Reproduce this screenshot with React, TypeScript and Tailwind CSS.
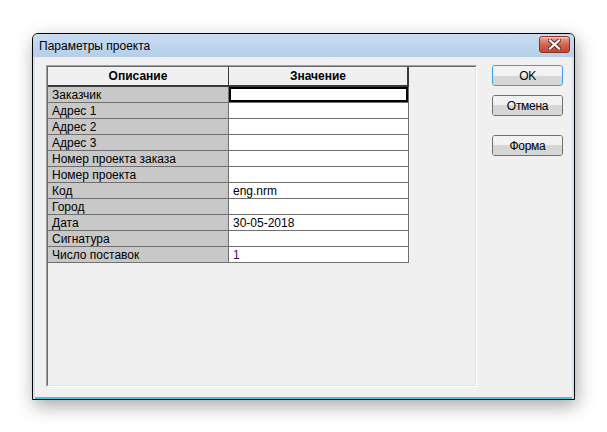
import React from "react";

type Row = { label: string; value?: string; accent?: boolean; selected?: boolean };

const rows: Row[] = [
  { label: "Заказчик", selected: true },
  { label: "Адрес 1" },
  { label: "Адрес 2" },
  { label: "Адрес 3" },
  { label: "Номер проекта заказа" },
  { label: "Номер проекта" },
  { label: "Код", value: "eng.nrm" },
  { label: "Город" },
  { label: "Дата", value: "30-05-2018" },
  { label: "Сигнатура" },
  { label: "Число поставок", value: "1", accent: true },
];

const font = { fontFamily: '"Liberation Sans", Arial, sans-serif' };

const Button = ({ label, primary, className = "" }: { label: string; primary?: boolean; className?: string }) => (
  <button
    className={
      "block h-[21px] w-[71px] rounded-[3px] border p-0 " +
      (primary
        ? "border-[#3c9fe0] shadow-[inset_0_0_0_1px_#a8e2fb] "
        : "border-[#707070] shadow-[inset_0_0_0_1px_#fcfcfc] ") +
      className
    }
  >
    <div className="flex h-full w-full items-center justify-center rounded-[2px] bg-gradient-to-b from-[#f2f2f2] from-50% to-[#d6d6d6] to-50% text-[12px] leading-none tracking-[-0.3px] text-black">
      {label}
    </div>
  </button>
);

const CloseIcon = () => (
  <div className="flex h-[17px] w-[31px] items-center justify-center rounded-[3px] border border-[#8a3328] bg-gradient-to-b from-[#e9a99b] via-[#d2654f] to-[#c4432d] shadow-[inset_0_1px_0_rgba(255,255,255,0.5)]">
    <svg width="13" height="11" viewBox="0 0 13 11">
      <path
        d="M2 1.5 L11 9.5 M11 1.5 L2 9.5"
        stroke="#5a2a22"
        strokeWidth="4"
        strokeLinecap="square"
      />
      <path
        d="M2 1.5 L11 9.5 M11 1.5 L2 9.5"
        stroke="#ffffff"
        strokeWidth="2.2"
        strokeLinecap="square"
      />
    </svg>
  </div>
);

export default function App() {
  return (
    <div className="h-[432px] w-[607px] bg-white pl-[32px] pt-[33px]" style={font}>
      <div className="flex h-[367px] w-[543px] flex-col rounded-t-[6px] border border-black bg-[#d3e3f3] shadow-[2px_6px_18px_rgba(0,0,0,0.35)]">
        <div className="flex h-[23px] items-center justify-between rounded-t-[5px] bg-gradient-to-b from-[#c9dcf0] to-[#b6cee9] pl-[6px] pr-[4px]">
          <span className="pt-[1px] text-[12px] text-black">Параметры проекта</span>
          <div className="-mt-[2px]">
            <CloseIcon />
          </div>
        </div>
        <div className="mx-[2px] flex flex-1 border-b-2 border-b-[#43c3ea] bg-[#f0f0f0]">
          <div className="flex flex-1 pl-[11px] pr-[9px] pt-[8px]">
            <div className="h-[322px] w-[431px] border border-l-[#a0a0a0] border-t-[#a0a0a0] border-r-white border-b-white">
              <div className="h-full w-full border border-l-[#696969] border-t-[#696969] border-r-[#e3e3e3] border-b-[#e3e3e3] bg-[#f0f0f0]">
                <div className="w-[361px] text-[12px] text-black">
                  <div className="flex h-[20px] font-bold">
                    <div className="flex w-[181px] items-center justify-center border-b-2 border-r border-[#3a3a3a] bg-[#f0f0f0]">
                      Описание
                    </div>
                    <div className="flex w-[180px] items-center justify-center border-b-2 border-r-2 border-[#3a3a3a] bg-[#f0f0f0]">
                      Значение
                    </div>
                  </div>
                  {rows.map((r) => (
                    <div key={r.label} className="flex h-[16px]">
                      <div className="flex w-[181px] items-center border-b border-r border-[#707070] bg-[#c8c8c8] pl-[4px]">
                        {r.label}
                      </div>
                      <div className="flex w-[180px] border-b border-r border-[#707070] bg-white">
                        {r.selected ? (
                          <div className="h-full w-full border-2 border-black bg-white" />
                        ) : (
                          <div
                            className={
                              "flex items-center pl-[4px] " +
                              (r.accent ? "text-[#4a0a5a]" : "text-black")
                            }
                          >
                            {r.value}
                          </div>
                        )}
                      </div>
                    </div>
                  ))}
                </div>
              </div>
            </div>
            <div className="ml-[15px] flex flex-col">
              <Button label="OK" primary />
              <Button label="Отмена" className="mt-[9px] h-[20px]" />
              <Button label="Форма" className="mt-[19px] h-[20px]" />
            </div>
          </div>
        </div>
      </div>
    </div>
  );
}
